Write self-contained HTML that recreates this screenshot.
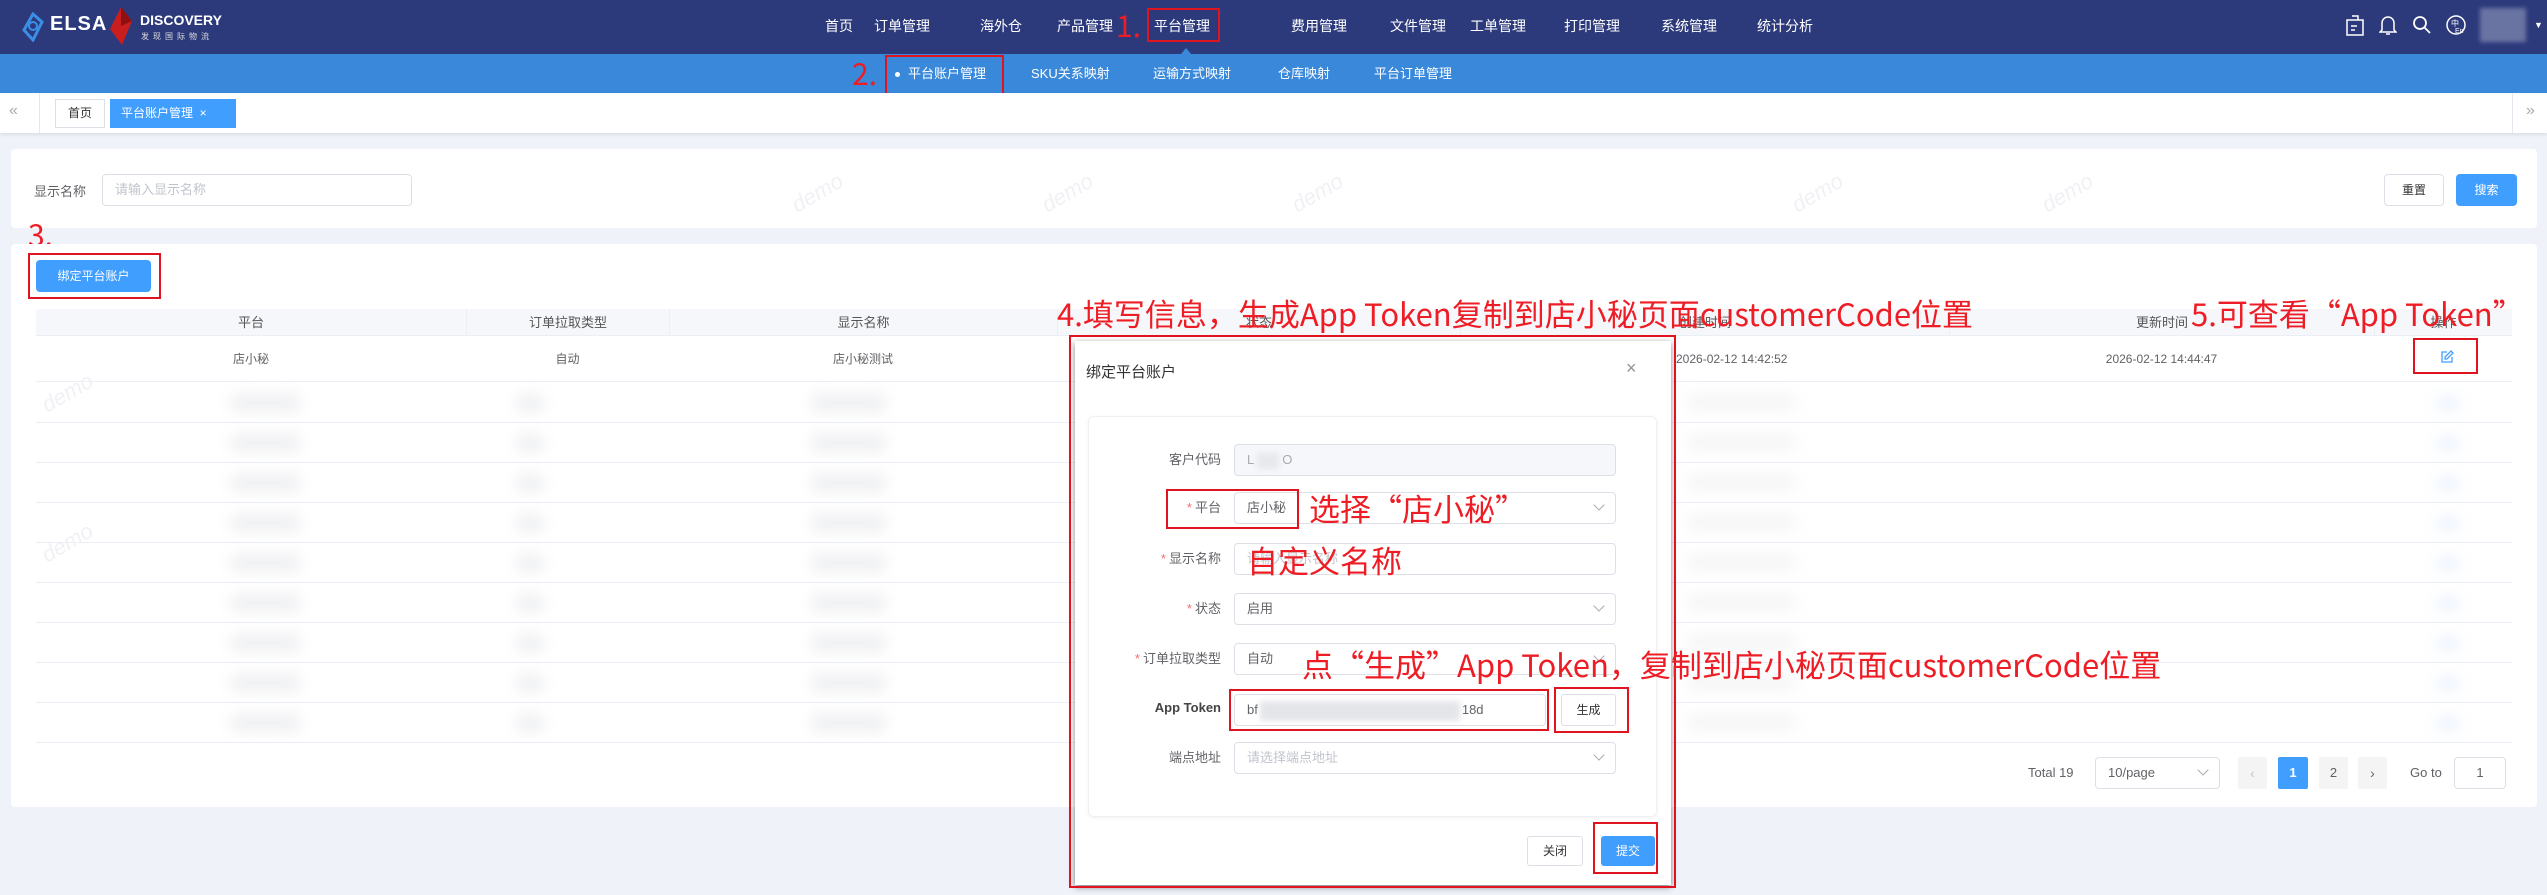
<!DOCTYPE html>
<html><head><meta charset="utf-8">
<style>
*{margin:0;padding:0;box-sizing:border-box}
body{width:2547px;height:895px;overflow:hidden;background:#eff3f9;font-family:"Liberation Sans","Noto Sans CJK SC",sans-serif;font-size:14px;color:#606266;position:relative}
.a{position:absolute}
.nav{left:0;top:0;width:2547px;height:54px;background:#2c3a7c}
.nav span{position:absolute;top:17px;color:#fff;font-size:14px;line-height:18px}
.sub{left:0;top:54px;width:2547px;height:39px;background:#3a88da}
.sub span{position:absolute;top:11px;color:#fff;font-size:13px;line-height:18px}
.tabs{left:0;top:93px;width:2547px;height:40px;background:#fff;box-shadow:0 2px 3px rgba(0,0,0,.08)}
.card{background:#fff;border-radius:4px}
.red{color:#ee1c24;font-family:"Noto Sans CJK SC","Liberation Sans",sans-serif;white-space:nowrap}
.rb{border:2px solid #e0141e}
.inp{border:1px solid #dcdfe6;border-radius:4px;background:#fff;font-size:13px;line-height:30px;padding-left:12px;color:#606266}
.ph{color:#c0c4cc}
.th{top:309px;height:27px;background:#f5f7fa;border-bottom:1px solid #ebeef5;color:#555;font-size:13px;line-height:27px;text-align:center}
.td{font-size:12px;color:#606266;text-align:center;line-height:46px}
.blob{background:#d8dadf;filter:blur(7px);border-radius:6px;opacity:.4}
.lab{width:130px;text-align:right;font-size:13px;color:#606266;line-height:32px}
.lab i{color:#f56c6c;font-style:normal;margin-right:3px}
.caret{position:absolute;right:12px;top:8px;width:8px;height:8px;border-right:1px solid #aaa;border-bottom:1px solid #aaa;transform:rotate(45deg)}
.wm{color:#f0f1f4;font-size:22px;font-style:italic;transform:rotate(-30deg)}
</style></head><body>

<div class="a nav">
  <svg class="a" style="left:22px;top:12px" width="22" height="30" viewBox="0 0 22 30"><path d="M11 2 L20 10 L11 28 L2 18 Z" fill="none" stroke="#3a8ee6" stroke-width="3"/><circle cx="11" cy="14" r="4" fill="none" stroke="#3a8ee6" stroke-width="2"/></svg>
  <div class="a" style="left:50px;top:13px;color:#fff;font-weight:bold;font-size:20px;letter-spacing:1px">ELSA</div>
  <svg class="a" style="left:108px;top:7px" width="26" height="38" viewBox="0 0 26 38"><path d="M13 0 L24 14 L14 38 L2 22 Z" fill="#c81e1e"/><path d="M13 0 L24 14 L13 19 Z" fill="#8e1010"/></svg>
  <div class="a" style="left:140px;top:12px;color:#fff;font-weight:bold;font-size:14px">DISCOVERY</div>
  <div class="a" style="left:141px;top:31px;color:#ddd;font-size:8px;letter-spacing:4px">发现国际物流</div>
  <span style="left:825px">首页</span><span style="left:874px">订单管理</span><span style="left:980px">海外仓</span><span style="left:1057px">产品管理</span><span style="left:1154px">平台管理</span><span style="left:1291px">费用管理</span><span style="left:1390px">文件管理</span><span style="left:1470px">工单管理</span><span style="left:1564px">打印管理</span><span style="left:1661px">系统管理</span><span style="left:1757px">统计分析</span>
  <div class="a" style="left:1181px;top:48px;width:0;height:0;border-left:5px solid transparent;border-right:5px solid transparent;border-bottom:6px solid #3a88da"></div>
  <svg class="a" style="left:2345px;top:15px" width="20" height="22" viewBox="0 0 20 22" fill="none" stroke="#fff" stroke-width="1.5"><rect x="2" y="5" width="16" height="15"/><path d="M7 1h6v4M6 11h6M6 15h4"/></svg>
  <svg class="a" style="left:2379px;top:14px" width="18" height="22" viewBox="0 0 18 22" fill="none" stroke="#fff" stroke-width="1.5"><path d="M3 16V9a6 6 0 0 1 12 0v7l2 2H1z M7 20h4"/></svg>
  <svg class="a" style="left:2412px;top:15px" width="20" height="20" viewBox="0 0 20 20" fill="none" stroke="#fff" stroke-width="1.8"><circle cx="8" cy="8" r="6"/><path d="M12.5 12.5L18 18"/></svg>
  <svg class="a" style="left:2445px;top:14px" width="22" height="22" viewBox="0 0 22 22" fill="none" stroke="#fff" stroke-width="1.5"><circle cx="11" cy="11" r="9"/><text x="6" y="12" fill="#fff" stroke="none" font-size="8">中</text><text x="10" y="19" fill="#fff" stroke="none" font-size="7">En</text></svg>
  <div class="a" style="left:2480px;top:8px;width:46px;height:34px;background:#6a74a2;filter:blur(2px)"></div>
  <div class="a" style="left:2534px;top:20px;color:#fff;font-size:9px">▼</div>
</div>
<div class="a red rb" style="left:1147px;top:8px;width:73px;height:34px"></div>
<div class="a red" style="left:1116px;top:4px;font-size:30px;line-height:40px">1.</div>

<div class="a sub">
  <div class="a" style="left:895px;top:18px;width:5px;height:5px;border-radius:50%;background:#fff"></div>
  <span style="left:908px">平台账户管理</span><span style="left:1031px">SKU关系映射</span><span style="left:1153px">运输方式映射</span><span style="left:1278px">仓库映射</span><span style="left:1374px">平台订单管理</span>
</div>
<div class="a rb" style="left:885px;top:55px;width:119px;height:40px"></div>
<div class="a red" style="left:852px;top:52px;font-size:30px;line-height:40px">2.</div>

<div class="a tabs">
  <div class="a" style="left:9px;top:9px;color:#aaa;font-size:16px">«</div>
  <div class="a" style="left:39px;top:0;width:1px;height:40px;background:#e4e7ed"></div>
  <div class="a" style="left:55px;top:6px;width:50px;height:29px;border:1px solid #dcdfe6;font-size:12px;line-height:27px;text-align:center;color:#333">首页</div>
  <div class="a" style="left:110px;top:6px;width:126px;height:29px;background:#409eff;color:#fff;font-size:12px;line-height:29px;padding-left:11px">平台账户管理&nbsp; ×</div>
  <div class="a" style="left:2512px;top:0;width:1px;height:40px;background:#e4e7ed"></div>
  <div class="a" style="left:2526px;top:9px;color:#aaa;font-size:16px">»</div>
</div>

<div class="a card" style="left:11px;top:149px;width:2526px;height:79px"></div>
<div class="a" style="left:34px;top:181px;font-size:13px;color:#606266">显示名称</div>
<div class="a inp ph" style="left:102px;top:174px;width:310px;height:32px">请输入显示名称</div>
<div class="a" style="left:2384px;top:174px;width:60px;height:32px;border:1px solid #dcdfe6;border-radius:4px;font-size:12px;line-height:30px;text-align:center;color:#333;background:#fff">重置</div>
<div class="a" style="left:2456px;top:174px;width:61px;height:32px;background:#409eff;border-radius:4px;font-size:12px;line-height:32px;text-align:center;color:#fff">搜索</div>

<div class="a red" style="left:28px;top:213px;font-size:30px;line-height:40px">3.</div>
<div class="a card" style="left:11px;top:244px;width:2526px;height:563px"></div>
<div class="a" style="left:36px;top:260px;width:115px;height:32px;background:#409eff;border-radius:4px;color:#fff;font-size:12px;line-height:32px;text-align:center">绑定平台账户</div>
<div class="a rb" style="left:28px;top:253px;width:133px;height:46px"></div>

<!-- table -->
<div class="a th" style="left:36px;width:430px">平台</div>
<div class="a th" style="left:466px;width:203px;border-left:1px solid #ebeef5">订单拉取类型</div>
<div class="a th" style="left:669px;width:388px;border-left:1px solid #ebeef5">显示名称</div>
<div class="a th" style="left:1057px;width:403px;border-left:1px solid #ebeef5">状态</div>
<div class="a th" style="left:1460px;width:489px;border-left:1px solid #ebeef5">创建时间</div>
<div class="a th" style="left:1949px;width:425px;border-left:1px solid #ebeef5">更新时间</div>
<div class="a th" style="left:2374px;width:138px;border-left:1px solid #ebeef5">操作</div>
<div class="a" style="left:36px;top:336px;width:2476px;height:46px;border-bottom:1px solid #ebeef5"></div>
<div class="a td" style="left:36px;top:336px;width:430px">店小秘</div>
<div class="a td" style="left:466px;top:336px;width:203px">自动</div>
<div class="a td" style="left:669px;top:336px;width:388px">店小秘测试</div>
<div class="a td" style="left:1676px;top:336px;width:160px;text-align:left">2026-02-12 14:42:52</div>
<div class="a td" style="left:1949px;top:336px;width:425px">2026-02-12 14:44:47</div>
<svg class="a" style="left:2440px;top:350px" width="14" height="14" viewBox="0 0 14 14" fill="none" stroke="#409eff" stroke-width="1.3"><path d="M7 2H2v10h10V7"/><path d="M11 1l2 2-6 6H5V7z"/></svg>
<div class="a rb" style="left:2413px;top:338px;width:65px;height:36px"></div>
<div class="a" style="left:36px;top:422px;width:2476px;height:1px;background:#ebeef5;box-shadow:0 40px 0 #ebeef5,0 80px 0 #ebeef5,0 120px 0 #ebeef5,0 160px 0 #ebeef5,0 200px 0 #ebeef5,0 240px 0 #ebeef5,0 280px 0 #ebeef5,0 320px 0 #ebeef5"></div>
<div class="a" style="left:36px;top:382px;width:2476px;height:360px">
  <div class="a blob" style="left:195px;top:12px;width:70px;height:18px;box-shadow:0 40px 0 #d8dadf,0 80px 0 #d8dadf,0 120px 0 #d8dadf,0 160px 0 #d8dadf,0 200px 0 #d8dadf,0 240px 0 #d8dadf,0 280px 0 #d8dadf,0 320px 0 #d8dadf"></div>
  <div class="a blob" style="left:480px;top:12px;width:28px;height:18px;box-shadow:0 40px 0 #d8dadf,0 80px 0 #d8dadf,0 120px 0 #d8dadf,0 160px 0 #d8dadf,0 200px 0 #d8dadf,0 240px 0 #d8dadf,0 280px 0 #d8dadf,0 320px 0 #d8dadf"></div>
  <div class="a blob" style="left:775px;top:12px;width:75px;height:18px;box-shadow:0 40px 0 #d8dadf,0 80px 0 #d8dadf,0 120px 0 #d8dadf,0 160px 0 #d8dadf,0 200px 0 #d8dadf,0 240px 0 #d8dadf,0 280px 0 #d8dadf,0 320px 0 #d8dadf"></div>
  <div class="a blob" style="left:1650px;top:12px;width:110px;height:16px;opacity:.25;box-shadow:0 40px 0 #d8dadf,0 80px 0 #d8dadf,0 120px 0 #d8dadf,0 160px 0 #d8dadf,0 200px 0 #d8dadf,0 240px 0 #d8dadf,0 280px 0 #d8dadf,0 320px 0 #d8dadf"></div>
  <div class="a blob" style="left:2400px;top:14px;width:24px;height:14px;background:#cfe3fb;opacity:.4;box-shadow:0 40px 0 #cfe3fb,0 80px 0 #cfe3fb,0 120px 0 #cfe3fb,0 160px 0 #cfe3fb,0 200px 0 #cfe3fb,0 240px 0 #cfe3fb,0 280px 0 #cfe3fb,0 320px 0 #cfe3fb"></div>
</div>

<!-- pagination -->
<div class="a" style="left:2028px;top:765px;font-size:13px">Total 19</div>
<div class="a inp" style="left:2095px;top:757px;width:125px;height:32px">10/page<div class="caret"></div></div>
<div class="a" style="left:2238px;top:757px;width:29px;height:32px;background:#f4f4f5;border-radius:2px;color:#c0c4cc;text-align:center;line-height:32px">‹</div>
<div class="a" style="left:2278px;top:757px;width:30px;height:32px;background:#409eff;border-radius:2px;color:#fff;font-size:13px;text-align:center;line-height:32px;font-weight:bold">1</div>
<div class="a" style="left:2319px;top:757px;width:29px;height:32px;background:#f4f4f5;border-radius:2px;color:#606266;font-size:13px;text-align:center;line-height:32px">2</div>
<div class="a" style="left:2358px;top:757px;width:29px;height:32px;background:#f4f4f5;border-radius:2px;color:#606266;text-align:center;line-height:32px">›</div>
<div class="a" style="left:2410px;top:765px;font-size:13px">Go to</div>
<div class="a inp" style="left:2454px;top:757px;width:52px;height:32px;text-align:center;padding:0">1</div>

<!-- annotations -->
<div class="a red" style="left:1057px;top:291px;font-size:31px;line-height:44px">4.填写信息，生成App Token复制到店小秘页面customerCode位置</div>
<div class="a red" style="left:2191px;top:291px;font-size:31px;line-height:44px">5.可查看“App Token”</div>

<!-- modal -->
<div class="a" style="left:1075px;top:341px;width:596px;height:544px;background:#fff;box-shadow:0 2px 6px rgba(0,0,0,.5)">
  <div class="a" style="left:11px;top:20px;font-size:15px;color:#303133">绑定平台账户</div>
  <div class="a" style="left:551px;top:17px;font-size:18px;color:#909399">×</div>
  <div class="a" style="left:13px;top:75px;width:569px;height:401px;border:1px solid #eef0f4;border-radius:6px;box-shadow:0 1px 4px rgba(0,0,0,.06)"></div>
  <div class="a" style="left:452px;top:495px;width:56px;height:30px;border:1px solid #dcdfe6;border-radius:3px;font-size:12px;line-height:28px;text-align:center;color:#333">关闭</div>
  <div class="a" style="left:526px;top:495px;width:54px;height:30px;background:#409eff;border-radius:3px;font-size:12px;line-height:30px;text-align:center;color:#fff">提交</div>
</div>
<div class="a rb" style="left:1069px;top:335px;width:607px;height:553px"></div>
<!-- form rows -->
<div class="a lab" style="left:1091px;top:444px">客户代码</div>
<div class="a inp" style="left:1234px;top:444px;width:382px;height:32px;background:#f5f7fa;color:#aaa">L<span style="display:inline-block;width:22px;height:16px;background:#e6e8ec;filter:blur(3px);vertical-align:middle;margin:0 3px"></span>O</div>
<div class="a lab" style="left:1091px;top:492px"><i>*</i>平台</div>
<div class="a inp" style="left:1234px;top:492px;width:382px;height:32px">店小秘<div class="caret"></div></div>
<div class="a lab" style="left:1091px;top:543px"><i>*</i>显示名称</div>
<div class="a inp ph" style="left:1234px;top:543px;width:382px;height:32px">请输入显示名称</div>
<div class="a lab" style="left:1091px;top:593px"><i>*</i>状态</div>
<div class="a inp" style="left:1234px;top:593px;width:382px;height:32px">启用<div class="caret"></div></div>
<div class="a lab" style="left:1091px;top:643px"><i>*</i>订单拉取类型</div>
<div class="a inp" style="left:1234px;top:643px;width:382px;height:32px">自动<div class="caret"></div></div>
<div class="a lab" style="left:1091px;top:692px;font-weight:bold;color:#444">App Token</div>
<div class="a inp" style="left:1234px;top:694px;width:312px;height:32px">bf<span style="display:inline-block;width:200px;height:20px;background:#e3e5e9;filter:blur(3px);vertical-align:middle;margin:0 2px"></span>18d</div>
<div class="a" style="left:1561px;top:694px;width:55px;height:32px;border:1px solid #dcdfe6;border-radius:3px;font-size:12px;line-height:30px;text-align:center;color:#333;background:#fff">生成</div>
<div class="a lab" style="left:1091px;top:742px">端点地址</div>
<div class="a inp ph" style="left:1234px;top:742px;width:382px;height:32px">请选择端点地址<div class="caret"></div></div>

<div class="a rb" style="left:1166px;top:489px;width:133px;height:40px"></div>
<div class="a rb" style="left:1229px;top:689px;width:320px;height:42px"></div>
<div class="a rb" style="left:1554px;top:687px;width:75px;height:46px"></div>
<div class="a rb" style="left:1593px;top:822px;width:65px;height:52px"></div>
<div class="a red" style="left:1309px;top:488px;font-size:31px;line-height:40px">选择“店小秘”</div>
<div class="a red" style="left:1247px;top:540px;font-size:31px;line-height:40px">自定义名称</div>
<div class="a red" style="left:1302px;top:643px;font-size:31px;line-height:42px">点“生成”App Token，复制到店小秘页面customerCode位置</div>

<div class="a wm" style="left:40px;top:380px">demo</div>
<div class="a wm" style="left:790px;top:180px">demo</div>
<div class="a wm" style="left:1040px;top:180px">demo</div>
<div class="a wm" style="left:1290px;top:180px">demo</div>
<div class="a wm" style="left:1790px;top:180px">demo</div>
<div class="a wm" style="left:2040px;top:180px">demo</div>
<div class="a wm" style="left:40px;top:530px">demo</div>
</body></html>
